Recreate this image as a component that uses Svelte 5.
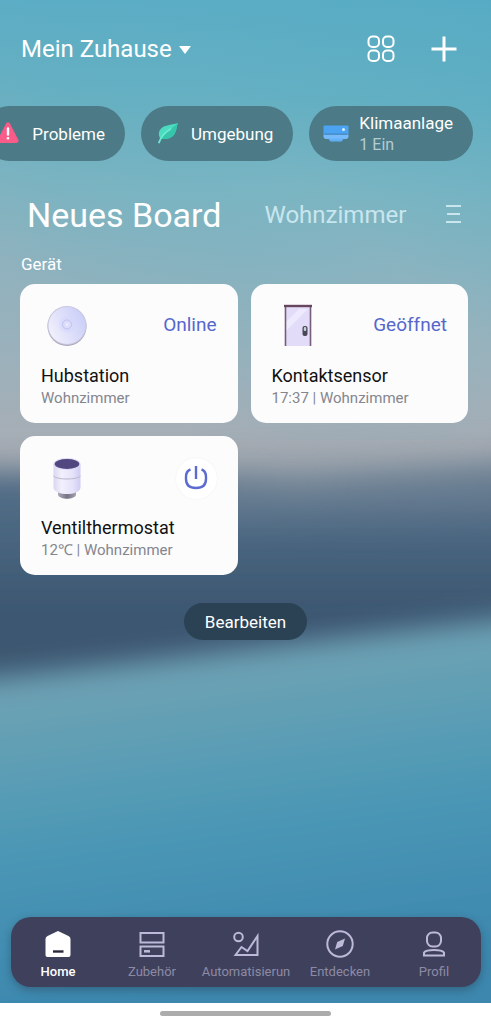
<script>
  let power = $state(true);
  let active = $state('Home');
  const tabs = ['Home', 'Zubehör', 'Automatisierun', 'Entdecken', 'Profil'];
</script>

<div class="page">
  <main class="screen">
    <svg class="wallpaper" viewBox="0 0 491 1003" preserveAspectRatio="none" aria-hidden="true">
      <defs>
        <linearGradient id="sky" x1="0" y1="0" x2="0" y2="1">
          <stop offset="0" stop-color="#5badc5" />
          <stop offset=".1" stop-color="#66b0c2" />
          <stop offset=".19" stop-color="#7bb5c2" />
          <stop offset=".28" stop-color="#8cb3bf" />
          <stop offset=".36" stop-color="#9ab2bc" />
          <stop offset=".43" stop-color="#a8aeb5" />
          <stop offset=".5" stop-color="#98a0aa" />
          <stop offset="1" stop-color="#98a0aa" />
        </linearGradient>
        <linearGradient id="glow" x1="0" y1="1" x2="1" y2="0">
          <stop offset=".2" stop-color="#a0aeb8" stop-opacity=".28" />
          <stop offset=".6" stop-color="#4fa9c2" stop-opacity="0" />
          <stop offset="1" stop-color="#4fa9c2" stop-opacity=".35" />
        </linearGradient>
        <linearGradient id="land" gradientUnits="userSpaceOnUse" x1="0" y1="460" x2="0" y2="670">
          <stop offset="0" stop-color="#587088" />
          <stop offset=".3" stop-color="#4c6882" />
          <stop offset=".7" stop-color="#3d5771" />
          <stop offset="1" stop-color="#3b5770" />
        </linearGradient>
        <linearGradient id="water" gradientUnits="userSpaceOnUse" x1="0" y1="655" x2="48" y2="1010">
          <stop offset="0" stop-color="#74a1b5" />
          <stop offset=".16" stop-color="#6aa1b4" />
          <stop offset=".36" stop-color="#599db5" />
          <stop offset=".6" stop-color="#4895b5" />
          <stop offset="1" stop-color="#3d87ae" />
        </linearGradient>
        <filter id="soft" x="-20%" y="-30%" width="140%" height="160%"><feGaussianBlur stdDeviation="14" /></filter>
        <filter id="haze" x="-30%" y="-100%" width="160%" height="300%"><feGaussianBlur stdDeviation="18" /></filter>
      </defs>
      <rect width="491" height="1003" fill="url(#sky)" />
      <rect width="491" height="440" fill="url(#glow)" />
      <path d="M-80 470 L130 474 L300 484 L580 464 V760 H-80Z" fill="url(#land)" filter="url(#soft)" />
      <path d="M200 470 L580 455 V512 L210 520Z" fill="#7c8c9b" opacity=".5" filter="url(#haze)" />
      <path d="M-80 686 L120 664 L340 638 L580 610 V1120 H-80Z" fill="url(#water)" filter="url(#soft)" />
    </svg>

    <header class="top">
      <button class="home">Mein Zuhause
        <svg width="14" height="9" viewBox="0 0 14 9" aria-hidden="true"><path d="M1 1h12L7 9z" fill="#fff" /></svg>
      </button>
      <div class="actions">
        <button aria-label="Ansicht">
          <svg width="28" height="28" viewBox="0 0 28 28" fill="none" stroke="#fff" stroke-width="2">
            <rect x="1.5" y="1.5" width="10.5" height="10.5" rx="4" /><rect x="16" y="1.5" width="10.5" height="10.5" rx="4" />
            <rect x="1.5" y="15.5" width="10.5" height="10.5" rx="4" /><rect x="16" y="15.5" width="10.5" height="10.5" rx="4" />
          </svg>
        </button>
        <button aria-label="Hinzufügen">
          <svg width="26" height="26" viewBox="0 0 26 26" stroke="#fff" stroke-width="3"><path d="M13 .5v25M.5 13h25" /></svg>
        </button>
      </div>
    </header>

    <div class="chips">
      <button class="chip">
        <svg width="24" height="24" viewBox="0 0 24 24" aria-hidden="true">
          <path d="M10.200 1.200q1.800-2 3.600 0L22.400 18q.8 2.600-1.800 3H3.400Q.8 20.600 1.600 18z" fill="#f95c89" />
          <path d="M12 6.500v6" stroke="#fff" stroke-width="2.400" stroke-linecap="round" /><circle cx="12" cy="16.300" r="1.300" fill="#fff" />
        </svg>
        <span>Probleme</span>
      </button>
      <button class="chip">
        <svg width="24" height="24" viewBox="0 0 24 24" aria-hidden="true">
          <path d="M23 1C16 3 8 3 5 8c-2 3-1 6 0 8 5 2 12 1 15-5 2-4 1.500-7 3-10z" fill="#4bdcc0" />
          <path d="M23 1c-1.500 3-1 6-3 10-3 6-10 7-15 5z" fill="#35c6ab" />
          <path d="M4 20.500C5.500 16 9 11 15.500 7" fill="none" stroke="#6fe8d2" stroke-width="1.800" stroke-linecap="round" />
        </svg>
        <span>Umgebung</span>
      </button>
      <button class="chip">
        <svg width="24" height="24" viewBox="0 0 24 24" aria-hidden="true">
          <path d="M1.500 3.500h23q1 0 1 1v7.500H.5V4.500q0-1 1-1z" fill="#4ba3f2" />
          <path d="M.5 12.500h25v2.500q-.5 2-2.500 2H3q-2 0-2.500-2z" fill="#76bafa" />
          <path d="M5 16.500h16l-2.500 3h-11z" fill="#62b1f7" /><circle cx="20.500" cy="7.500" r="1.500" fill="#d8f1ff" />
          <path d="M2 12h22" stroke="#3b87cd" stroke-width="1" />
        </svg>
        <span>Klimaanlage<small>1 Ein</small></span>
      </button>
    </div>

    <div class="boards">
      <button class="board current">Neues Board</button>
      <button class="board">Wohnzimmer</button>
      <button class="menu" aria-label="Boards">
        <svg width="16" height="20" viewBox="0 0 16 20" stroke="#c9e6ee" stroke-width="2"><path d="M1 1h15M2 9h13M1 17h15" /></svg>
      </button>
    </div>

    <section>
      <h2>Gerät</h2>
      <div class="grid">
        <article class="card">
          <div class="row">
            <svg class="device" width="52" height="44" viewBox="0 0 52 44" aria-hidden="true">
              <defs><linearGradient id="disc" x1="0" y1=".8" x2="1" y2=".3"><stop stop-color="#f3f2fc" /><stop offset=".5" stop-color="#dedffa" /><stop offset="1" stop-color="#cbcff8" /></linearGradient></defs>
              <circle cx="26" cy="22.500" r="19.500" fill="#a9a6b8" /><circle cx="26" cy="21.500" r="19.500" fill="#c9c8df" />
              <circle cx="26" cy="21.500" r="18.500" fill="url(#disc)" />
              <circle cx="26" cy="20.500" r="8" fill="#d5d8fb" opacity=".5" />
              <circle cx="26" cy="20.500" r="4.500" fill="#dcdcfb" stroke="#bdc1ee" /><circle cx="26" cy="20.500" r="1.300" fill="#eeedff" />
            </svg>
            <span class="state">Online</span>
          </div>
          <h3>Hubstation</h3>
          <p>Wohnzimmer</p>
        </article>
        <article class="card">
          <div class="row">
            <svg class="device" width="52" height="44" viewBox="0 0 52 44" aria-hidden="true">
              <path d="M13.500 2h25v40h-25z" fill="#e3dcf8" /><path d="M14 27L36 5h-9L14 18z" fill="#eeeafd" />
              <path d="M13.500 42V2M38.500 42V2" stroke="#765d7b" stroke-width="1.600" /><path d="M12 2h28" stroke="#68455f" stroke-width="2.400" />
              <rect x="30.500" y="22" width="5" height="10" rx="2" fill="#4a4757" /><rect x="31.800" y="23" width="2.400" height="4" rx="1" fill="#c4d3dc" />
            </svg>
            <span class="state">Geöffnet</span>
          </div>
          <h3>Kontaktsensor</h3>
          <p>17:37 | Wohnzimmer</p>
        </article>
        <article class="card">
          <div class="row">
            <svg class="device" width="52" height="44" viewBox="0 0 52 44" aria-hidden="true">
              <defs>
                <linearGradient id="body"><stop stop-color="#d9d6f0" /><stop offset=".3" stop-color="#f2f0fd" /><stop offset=".7" stop-color="#e6e3fa" /><stop offset="1" stop-color="#cfcbf3" /></linearGradient>
                <linearGradient id="base"><stop stop-color="#adaab8" /><stop offset=".5" stop-color="#777386" /><stop offset="1" stop-color="#a5a2b1" /></linearGradient>
              </defs>
              <path d="M17 34v5c2 5 16 5 18 0v-5z" fill="url(#base)" />
              <path d="M12.500 8v24c2 8 25 8 27 0V8z" fill="url(#body)" />
              <ellipse cx="26" cy="8" rx="13.500" ry="6" fill="#dcd8f5" /><ellipse cx="26" cy="8" rx="12.300" ry="5" fill="#51467f" />
              <path d="M12.500 20c3 4 24 4 27 0" fill="none" stroke="#bbb7cc" />
            </svg>
            <button class="power" aria-label="Ein/Aus" aria-pressed={power} onclick={() => (power = !power)}>
              <svg width="24" height="24" viewBox="0 0 24 24" fill="none" stroke="#5b6bd2" stroke-width="2.400">
                <path d="M12 0v13" /><path d="M6.500 3.500Q2 5 2 11v2q0 9 10 9t10-9v-2q0-6-4.500-7.500" />
              </svg>
            </button>
          </div>
          <h3>Ventilthermostat</h3>
          <p>12℃ | Wohnzimmer</p>
        </article>
      </div>
    </section>

    <button class="edit">Bearbeiten</button>

    <nav>
      {#each tabs as tab, i}
        <button class:active={active === tab} onclick={() => (active = tab)}>
          <svg width="28" height="28" viewBox="0 0 28 28" fill="none" stroke="#bdb9d8" stroke-width="2" aria-hidden="true">
            {#if i === 0}
              <path d="M3.500 6L14 1l10.500 5q2 1 2 3v16q0 2-2 2h-21q-2 0-2-2V9q0-2 2-3z" fill="#fff" stroke="none" /><path d="M9 21.500h10.500" stroke="#292838" stroke-width="2.400" />
            {:else if i === 1}
              <rect x="2.500" y="3" width="23" height="9.500" /><rect x="2.500" y="16.500" width="23" height="9.500" /><path d="M6 21.300h6" stroke-width="2.500" />
            {:else if i === 2}
              <circle cx="6.500" cy="7" r="4.300" /><path d="M3.500 25L9.500 17l6 4L25.500 6v19z" />
            {:else if i === 3}
              <circle cx="14" cy="14" r="12.700" /><path d="M19 8.500L16.800 16 9 19.500 11.200 12z" fill="#bdb9d8" stroke="none" />
            {:else}
              <rect x="7" y="2.500" width="14" height="14" rx="5.500" /><path d="M4 25.500v-3q2-2.500 10-2.500t10 2.500v3z" />
            {/if}
          </svg>
          <span>{tab}</span>
        </button>
      {/each}
    </nav>
  </main>
  <div class="gesture"><i></i></div>
</div>

<style>
  :global(body) { margin: 0; }
  .page { min-height: 100vh; display: flex; flex-direction: column; font-family: Roboto, sans-serif; background: #fff; }
  button { border: 0; margin: 0; padding: 0; background: none; font: inherit; color: inherit; cursor: pointer; white-space: nowrap; }
  svg { display: block; flex: none; overflow: visible; }
  .screen { position: relative; isolation: isolate; flex: 1; display: flex; flex-direction: column; color: #fff; overflow: hidden; }
  .wallpaper { position: absolute; inset: 0; width: 100%; height: 100%; z-index: -1; overflow: hidden; }
  .top { display: flex; justify-content: space-between; align-items: center; height: 32px; padding: 33px 34px 0 21px; }
  .home { display: flex; align-items: center; gap: 6px; font-size: 24px; line-height: 32px; }
  .actions { display: flex; align-items: center; gap: 36px; }
  .chips { display: flex; justify-content: flex-end; gap: 16px; padding: 41px 18px 0 0; overflow: hidden; }
  .chip { flex: none; display: flex; align-items: center; gap: 12px; height: 55px; padding: 0 20px 0 14px; border-radius: 28px; background: #4c7a86; font-size: 17px; line-height: 22px; text-align: left; }
  .chip small { display: block; font-size: 16px; color: #b3ccd3; }
  .boards { display: flex; align-items: center; height: 48px; padding: 30px 30px 0 27px; }
  .board { font-size: 24px; line-height: 48px; color: #c9e6ee; }
  .board.current { margin-right: 43px; font-size: 34px; color: #fff; }
  .menu { margin-left: auto; }
  h2 { margin: 14px 0 9px 21px; font-size: 17px; line-height: 22px; font-weight: 400; }
  .grid { display: grid; grid-template-columns: 1fr 1fr; gap: 13px; padding: 0 23px 0 20px; }
  .card { box-sizing: border-box; height: 139px; padding: 20px 21px; border-radius: 15px; background: #fcfcfd; color: #111; }
  .row { display: flex; justify-content: space-between; align-items: center; height: 44px; }
  .state { font-size: 19px; color: #5567cb; line-height: 24px; padding-bottom: 2px; }
  h3 { margin: 16px 0 0; font-size: 18px; line-height: 24px; font-weight: 400; }
  .card p { margin: 0; font-size: 15px; line-height: 20px; color: #85868d; }
  .power { display: grid; place-items: center; width: 41px; height: 41px; border-radius: 50%; background: #fff; box-shadow: 0 0 2px #0001; }
  .edit { align-self: center; margin-top: 28px; height: 37px; padding: 0 21px; border-radius: 19px; background: #2b4254; font-size: 17px; }
  nav { display: grid; grid-template-columns: repeat(5, 1fr); margin: auto 10px 16px 11px; height: 70px; border-radius: 20px; background: #3f405c; box-shadow: 0 3px 9px #22334466; }
  nav button { display: flex; flex-direction: column; align-items: center; padding-top: 13px; font-size: 13px; line-height: 18px; gap: 5px; color: #8d8ba4; }
  nav .active { color: #fff; font-weight: 500; }
  .gesture { height: 21px; display: grid; place-items: center; background: #fff; }
  .gesture i { width: 35%; height: 5px; border-radius: 3px; background: #acacac; }
</style>
